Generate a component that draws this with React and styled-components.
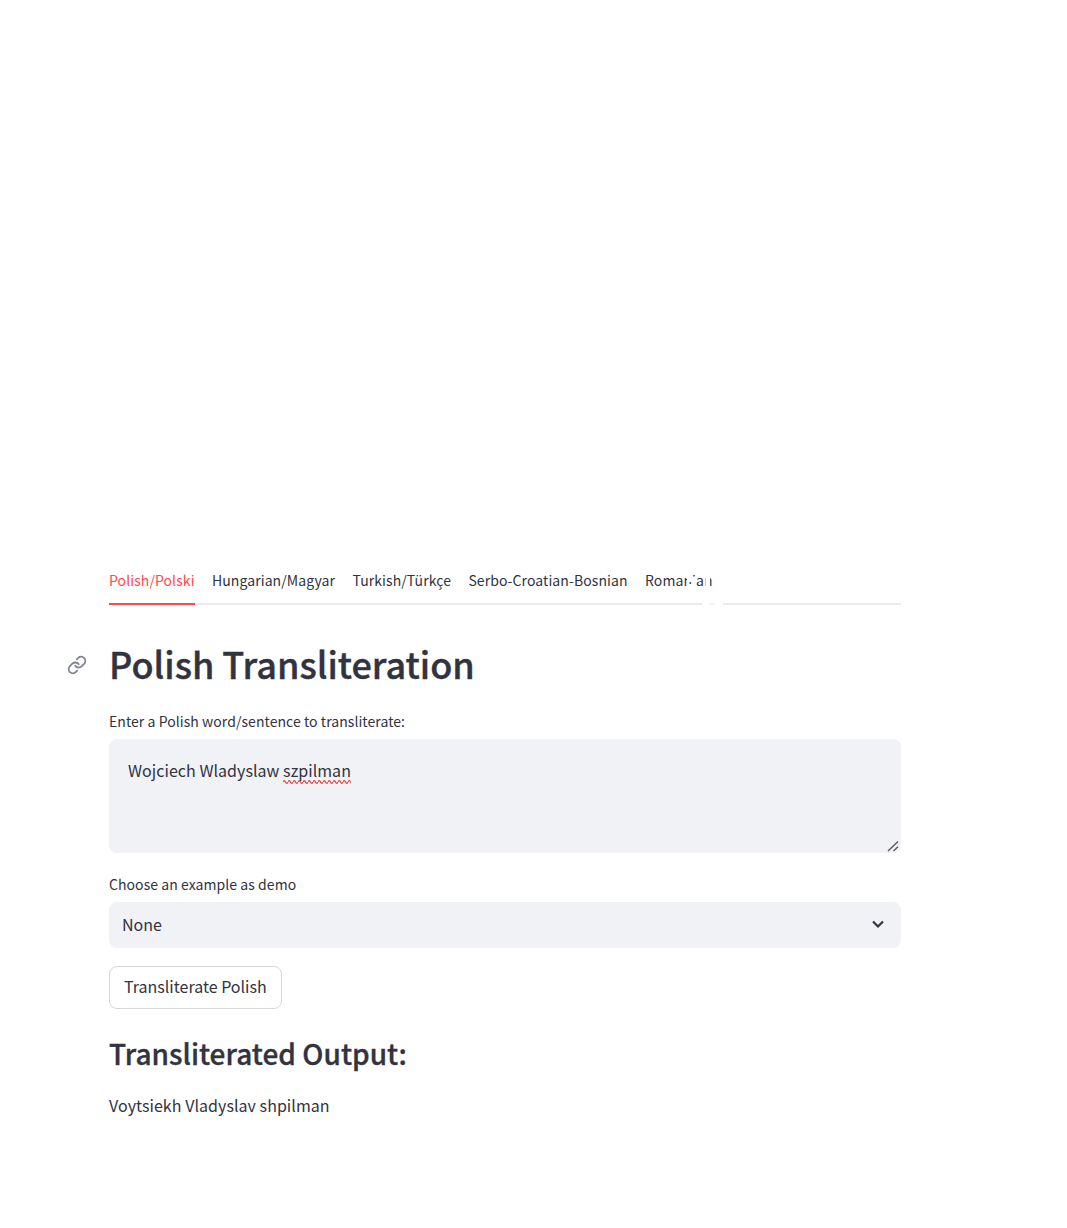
import React from "react";
import styled, { createGlobalStyle } from "styled-components";

const Global = createGlobalStyle`
  html, body { margin: 0; padding: 0; background: #fff; }
  body { font-family: "Noto Sans CJK SC", "Noto Sans", sans-serif; color: #31333f; }
  * { box-sizing: border-box; }
`;

const Page = styled.main`
  width: 1067px;
  height: 1228px;
  padding: 560px 166px 0 109px;
  display: flex;
  flex-direction: column;
`;

const TabBar = styled.div`
  position: relative;
  display: flex;
  gap: 17.4px;
  height: 45px;
  border-bottom: 2px solid #ebebed;
`;

const Tab = styled.div`
  height: 45px;
  padding-top: 10px;
  font-size: 14px;
  line-height: 21px;
  letter-spacing: 0.09px;
  white-space: nowrap;
  color: ${(p) => (p.$active ? "#ff4b4b" : "#31333f")};
  border-bottom: 2px solid ${(p) => (p.$active ? "#ff4b4b" : "transparent")};
`;

const TabMask = styled.svg`
  position: absolute;
  left: 576px;
  top: 0;
  width: 216px;
  height: 45px;
  color: #fff;
`;

const TitleRow = styled.div`
  position: relative;
  margin-top: 33px;
`;

const AnchorIcon = styled.svg`
  position: absolute;
  left: -42px;
  top: 17px;
  width: 20px;
  height: 20px;
  color: #808495;
`;

const Title = styled.h1`
  margin: 0;
  font-size: 36px;
  line-height: 50px;
  font-weight: 500;
  -webkit-text-stroke: 0.4px #31333f;
`;

const FieldLabel = styled.label`
  display: block;
  font-size: 14px;
  line-height: 18px;
  letter-spacing: 0.06px;
`;

const EntryLabel = styled(FieldLabel)`
  margin-top: 24px;
`;

const DemoLabel = styled(FieldLabel)`
  margin-top: 22px;
`;

const TextArea = styled.div`
  position: relative;
  margin-top: 9px;
  height: 114px;
  padding: 19px 19px 0;
  background: #f0f2f6;
  border-radius: 8px;
  font-size: 16px;
  line-height: 24px;
  letter-spacing: 0.04px;
`;

const Misspelled = styled.span`
  position: relative;
`;

const Squiggle = styled.svg`
  position: absolute;
  left: 0;
  bottom: -2px;
  width: 100%;
  height: 4px;
`;

const ResizeGrip = styled.svg`
  position: absolute;
  right: 2px;
  bottom: 1px;
  width: 12px;
  height: 12px;
  color: #555660;
`;

const Select = styled.div`
  margin-top: 9px;
  height: 46px;
  padding: 0 15.5px 2px 13px;
  display: flex;
  align-items: center;
  justify-content: space-between;
  background: #f0f2f6;
  border-radius: 8px;
  font-size: 16px;
  line-height: 24px;
`;

const Chevron = styled.svg`
  width: 16px;
  height: 16px;
  color: #31333f;
`;

const Button = styled.button`
  align-self: flex-start;
  margin-top: 18px;
  height: 43px;
  padding: 0 14px 4px;
  background: #fff;
  border: 1px solid #d5d6da;
  border-radius: 8px;
  font: inherit;
  font-size: 16px;
  line-height: 24px;
  color: #31333f;
`;

const SubTitle = styled.h2`
  margin: 24px 0 0;
  font-size: 28px;
  line-height: 40px;
  font-weight: 500;
  letter-spacing: 0.03px;
  -webkit-text-stroke: 0.35px #31333f;
`;

const Output = styled.p`
  margin: 20px 0 0;
  font-size: 16px;
  line-height: 24px;
  letter-spacing: 0.05px;
`;

export default function App() {
  return (
    <Page>
      <Global />
      <TabBar>
        <Tab $active>Polish/Polski</Tab>
        <Tab>Hungarian/Magyar</Tab>
        <Tab>Turkish/Türkçe</Tab>
        <Tab>Serbo-Croatian-Bosnian</Tab>
        <Tab>Romanian</Tab>
        <TabMask viewBox="0 0 216 45" fill="currentColor">
          <rect x="28" y="0" width="188" height="43" />
          <rect x="2" y="12" width="2" height="18" />
          <rect x="4" y="12" width="3" height="10" />
          <rect x="4" y="24" width="3" height="6" />
          <rect x="7" y="18" width="4" height="12" />
          <rect x="19" y="12" width="2" height="18" opacity="0.6" />
          <rect x="21" y="12" width="4" height="18" />
          <rect x="17" y="43" width="21" height="2" />
          <path d="M23 45l3-2h2l3 2z" fill="#f1f1f3" />
        </TabMask>
      </TabBar>
      <TitleRow>
        <AnchorIcon viewBox="0 0 24 24" fill="none" stroke="currentColor" strokeWidth="2.2" strokeLinecap="round" strokeLinejoin="round">
          <path d="M10 13a5 5 0 0 0 7.54.54l3-3a5 5 0 0 0-7.07-7.07l-1.72 1.71" />
          <path d="M14 11a5 5 0 0 0-7.54-.54l-3 3a5 5 0 0 0 7.07 7.07l1.71-1.71" />
        </AnchorIcon>
        <Title>Polish Transliteration</Title>
      </TitleRow>
      <EntryLabel>Enter a Polish word/sentence to transliterate:</EntryLabel>
      <TextArea>
        Wojciech Wladyslaw{" "}
        <Misspelled>
          szpilman
          <Squiggle preserveAspectRatio="none">
            <defs>
              <pattern id="squiggle" width="5" height="4" patternUnits="userSpaceOnUse">
                <path d="M0 2 Q1.25 -0.6 2.5 2 T5 2" fill="none" stroke="#f23d3d" strokeWidth="1.3" />
              </pattern>
            </defs>
            <rect width="100%" height="4" fill="url(#squiggle)" />
          </Squiggle>
        </Misspelled>
        <ResizeGrip viewBox="0 0 12 12" fill="none" stroke="currentColor" strokeWidth="1.4">
          <path d="M1 11 11 1.5" />
          <path d="M6.5 11 11 6.8" />
        </ResizeGrip>
      </TextArea>
      <DemoLabel>Choose an example as demo</DemoLabel>
      <Select>
        None
        <Chevron viewBox="0 0 16 16" fill="none" stroke="currentColor" strokeWidth="2.2">
          <path d="M3 5.5 8 10.5 13 5.5" />
        </Chevron>
      </Select>
      <Button>Transliterate Polish</Button>
      <SubTitle>Transliterated Output:</SubTitle>
      <Output>Voytsiekh Vladyslav shpilman</Output>
    </Page>
  );
}
